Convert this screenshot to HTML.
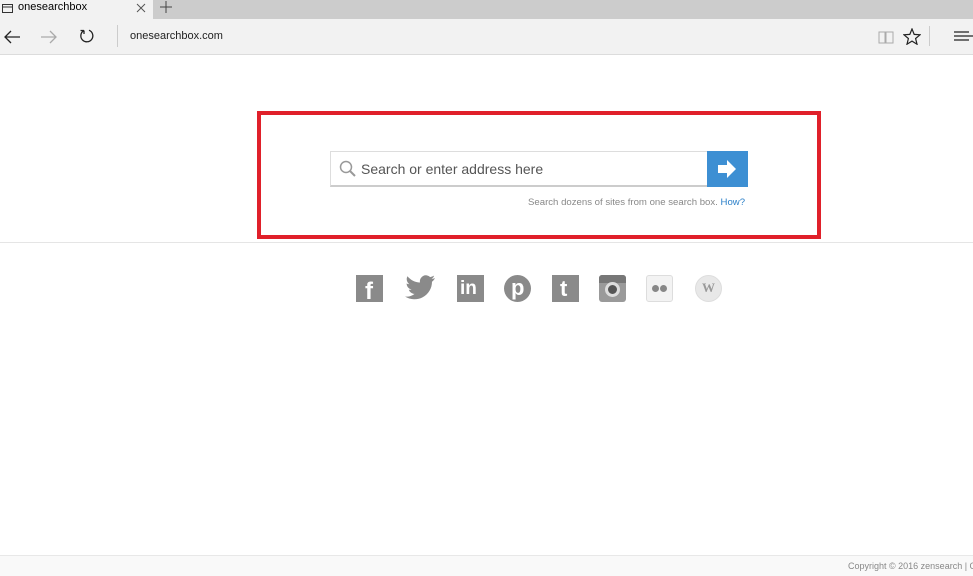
<!DOCTYPE html>
<html><head><meta charset="utf-8"><style>
*{margin:0;padding:0;box-sizing:border-box}
body{width:973px;height:576px;overflow:hidden;background:#fff;font-family:"Liberation Sans",Arial,sans-serif;position:relative}
.tabbar{position:absolute;top:0;left:0;width:973px;height:19px;background:#cccccc}
.tab{position:absolute;left:0;top:0;width:153px;height:19px;background:#f2f2f2;font-size:11px;color:#000}
.tab span{position:absolute;left:18px;top:1px}
.nav{position:absolute;top:19px;left:0;width:973px;height:36px;background:#f2f2f2;border-bottom:1px solid #dcdcdc}
.abs{position:absolute}
.url{position:absolute;left:130px;top:11px;font-size:11px;color:#222}
.line{position:absolute;top:242px;left:0;width:973px;height:1px;background:#e5e5e5}
.redbox{position:absolute;left:257px;top:111px;width:564px;height:128px;border:4px solid #e0202a}
.search{position:absolute;left:330px;top:151px;width:378px;height:36px;border:1px solid #ddd;border-bottom:2px solid #ccc;background:#fff}
.search span{position:absolute;left:30px;top:9px;font-size:14px;color:#555}
.btn{position:absolute;left:707px;top:151px;width:41px;height:36px;background:#3d8fd3}
.hint{position:absolute;left:528px;top:197px;font-size:9.6px;color:#888;white-space:nowrap}
.hint b{font-weight:normal;color:#2a7fc8}
.ic{position:absolute;top:275px;width:27px;height:27px}
.foot{position:absolute;top:555px;left:0;width:973px;height:21px;background:#f9f9f9;border-top:1px solid #e8e8e8}
.foot span{position:absolute;left:848px;top:5px;font-size:9px;color:#888;white-space:nowrap}
</style></head><body>
<div class="tabbar"></div>
<div class="tab"><svg class="abs" style="left:2px;top:4px" width="11" height="10"><rect x=".5" y=".5" width="10" height="8" fill="none" stroke="#333"/><line x1="0" y1="3" x2="11" y2="3" stroke="#333"/></svg><span>onesearchbox</span>
<svg class="abs" style="left:136px;top:3px" width="10" height="10"><path d="M1 1L9 9M9 1L1 9" stroke="#555" stroke-width="1"/></svg></div>
<svg class="abs" style="left:160px;top:1px" width="12" height="12"><path d="M6 0V12M0 6H12" stroke="#444"/></svg>
<div class="nav">
<svg class="abs" style="left:3px;top:11px" width="18" height="14"><path d="M17 7H2M8 1L2 7L8 13" fill="none" stroke="#222" stroke-width="1.3"/></svg>
<svg class="abs" style="left:40px;top:11px" width="18" height="14"><path d="M1 7H16M10 1L16 7L10 13" fill="none" stroke="#aaa" stroke-width="1.3"/></svg>
<svg class="abs" style="left:79px;top:9px" width="16" height="16"><path d="M5 2.5A6 6 0 1 0 10 2.2M5 2.5L5 6M5 2.5L1.5 2.5" fill="none" stroke="#222" stroke-width="1.3"/></svg>
<div class="abs" style="left:117px;top:6px;width:1px;height:22px;background:#ccc"></div>
<div class="url">onesearchbox.com</div>
<svg class="abs" style="left:878px;top:12px" width="16" height="13"><path d="M1 1H7V12H1ZM8 1H15V12H8Z" fill="none" stroke="#aaa"/></svg>
<svg class="abs" style="left:903px;top:9px" width="18" height="17" viewBox="0 0 18 17"><path d="M9 1L11.2 6.4L17 6.8L12.6 10.5L14 16.2L9 13.1L4 16.2L5.4 10.5L1 6.8L6.8 6.4Z" fill="none" stroke="#222" stroke-width="1.2"/></svg>
<div class="abs" style="left:929px;top:7px;width:1px;height:20px;background:#ccc"></div>
<svg class="abs" style="left:954px;top:12px" width="19" height="10"><path d="M0 1H15M0 5H19M0 9H15" stroke="#222" stroke-width="1.2"/></svg>
</div>
<div class="line"></div>
<div class="redbox"></div>
<div class="search"><svg class="abs" style="left:8px;top:8px" width="18" height="18"><circle cx="7" cy="7" r="5.5" fill="none" stroke="#999" stroke-width="1.5"/><path d="M11 11L16 16" stroke="#999" stroke-width="2"/></svg><span>Search or enter address here</span></div>
<div class="btn"><svg class="abs" style="left:11px;top:9px" width="19" height="18"><path d="M0 5H9V0L18 9L9 18V13H0Z" fill="#fff"/></svg></div>
<div class="hint">Search dozens of sites from one search box. <b>How?</b></div>
<div class="ic" style="left:356px;background:#8a8a8a"><span class="abs" style="left:9px;top:3px;font:bold 24px 'Liberation Sans';color:#fff">f</span></div>
<svg class="ic" style="left:404px;width:32px" viewBox="0 0 32 27"><path d="M31 3c-1 .6-2.3.9-3.5 1 1.3-.8 2.2-2 2.6-3.4-1.2.7-2.5 1.2-3.900 1.5A6 6 0 0 0 16 7.5C11 7.3 6.5 4.9 3.5 1.2c-1.7 3-.5 6.3 1.9 8-1 0-2-.3-2.8-.8 0 3 2.1 5.5 5 6.1-.9.3-1.900.3-2.800.1.8 2.5 3.1 4.2 5.8 4.3A12.5 12.5 0 0 1 1 21.5 17.5 17.5 0 0 0 28 6.7c1.2-.9 2.3-2 3-3.7z" fill="#8a8a8a"/></svg>
<div class="ic" style="left:457px;background:#8a8a8a"><span class="abs" style="left:3px;top:3px;font:bold 19px 'Liberation Sans';color:#fff">in</span></div>
<div class="ic" style="left:504px;border-radius:50%;background:#8a8a8a"><span class="abs" style="left:7px;top:0px;font:bold 22px 'Liberation Sans';color:#fff">p</span></div>
<div class="ic" style="left:552px;background:#8a8a8a"><span class="abs" style="left:8px;top:1px;font:bold 22px 'Liberation Sans';color:#fff">t</span></div>
<div class="ic" style="left:599px;border-radius:3px;background:#9a9a9a"><div class="abs" style="left:0;top:0;width:27px;height:8px;background:#777;border-radius:3px 3px 0 0"></div><div class="abs" style="left:6px;top:7px;width:15px;height:15px;border-radius:50%;background:#555;border:3px solid #ddd"></div></div>
<div class="ic" style="left:646px;border:1px solid #ddd;background:#f3f3f3;border-radius:3px"><div class="abs" style="left:5px;top:9px;width:7px;height:7px;border-radius:50%;background:#888"></div><div class="abs" style="left:13px;top:9px;width:7px;height:7px;border-radius:50%;background:#888"></div></div>
<div class="ic" style="left:695px;border-radius:50%;background:#e8e8e8;border:1px solid #ddd"><span class="abs" style="left:6px;top:4px;font:bold 13px 'Liberation Serif';color:#999">W</span></div>
<div class="foot"><span>Copyright © 2016 zensearch | C</span></div>
</body></html>
